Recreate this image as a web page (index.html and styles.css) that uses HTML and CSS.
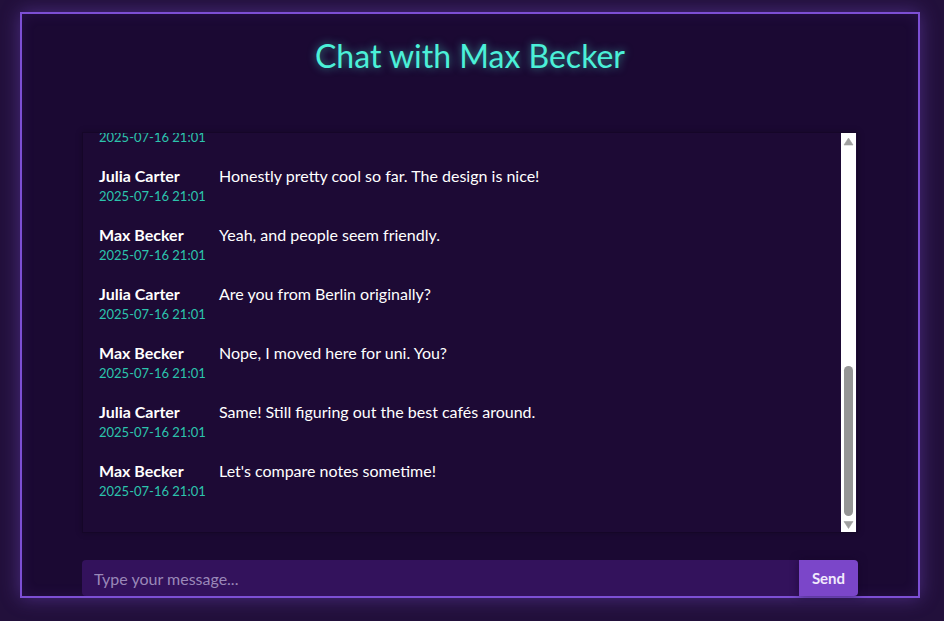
FILE: index.html
```html
<!DOCTYPE html>
<html lang="en">
<head>
<meta charset="utf-8">
<title>Chat with Max Becker</title>
<link rel="stylesheet" href="styles.css">
</head>
<body>
<div class="chat-container">
  <h1 class="chat-title">Chat with Max Becker</h1>
  <div class="chat-box-wrap">
    <div class="chat-box">
      <div class="chat-list">
        <div class="msg"><div class="meta"><div class="name">Julia Carter</div><div class="time">2025-07-16 21:00</div></div><div class="text">Hi Max! Nice to match with you.</div></div>
        <div class="msg"><div class="meta"><div class="name">Max Becker</div><div class="time">2025-07-16 21:00</div></div><div class="text">Hey Julia! Likewise.</div></div>
        <div class="msg"><div class="meta"><div class="name">Julia Carter</div><div class="time">2025-07-16 21:00</div></div><div class="text">How's your week going?</div></div>
        <div class="msg"><div class="meta"><div class="name">Max Becker</div><div class="time">2025-07-16 21:00</div></div><div class="text">Pretty busy, but good. Yours?</div></div>
        <div class="msg"><div class="meta"><div class="name">Julia Carter</div><div class="time">2025-07-16 21:00</div></div><div class="text">Same, lots of work but nothing crazy.</div></div>
        <div class="msg"><div class="meta"><div class="name">Max Becker</div><div class="time">2025-07-16 21:01</div></div><div class="text">Are you new here?</div></div>
        <div class="msg"><div class="meta"><div class="name">Julia Carter</div><div class="time">2025-07-16 21:01</div></div><div class="text">Yes, just joined a few days ago.</div></div>
        <div class="msg"><div class="meta"><div class="name">Max Becker</div><div class="time">2025-07-16 21:01</div></div><div class="text">Me too! Still figuring it out.</div></div>
        <div class="msg"><div class="meta"><div class="name">Julia Carter</div><div class="time">2025-07-16 21:01</div></div><div class="text">It's all pretty new to me as well.</div></div>
        <div class="msg"><div class="meta"><div class="name">Max Becker</div><div class="time">2025-07-16 21:01</div></div><div class="text">How do you like it so far?</div></div>
        <div class="msg"><div class="meta"><div class="name">Julia Carter</div><div class="time">2025-07-16 21:01</div></div><div class="text">Honestly pretty cool so far. The design is nice!</div></div>
        <div class="msg"><div class="meta"><div class="name">Max Becker</div><div class="time">2025-07-16 21:01</div></div><div class="text">Yeah, and people seem friendly.</div></div>
        <div class="msg"><div class="meta"><div class="name">Julia Carter</div><div class="time">2025-07-16 21:01</div></div><div class="text">Are you from Berlin originally?</div></div>
        <div class="msg"><div class="meta"><div class="name">Max Becker</div><div class="time">2025-07-16 21:01</div></div><div class="text">Nope, I moved here for uni. You?</div></div>
        <div class="msg"><div class="meta"><div class="name">Julia Carter</div><div class="time">2025-07-16 21:01</div></div><div class="text">Same! Still figuring out the best cafés around.</div></div>
        <div class="msg"><div class="meta"><div class="name">Max Becker</div><div class="time">2025-07-16 21:01</div></div><div class="text">Let's compare notes sometime!</div></div>
      </div>
    </div>
    <div class="scrollbar" aria-hidden="true">
      <svg width="15" height="399" viewBox="0 0 15 399">
        <rect x="0" y="0" width="15" height="399" fill="#ffffff"/>
        <polygon points="3,12 7.5,5 12,12" fill="#a0a0a0" stroke="#a0a0a0" stroke-width="0.6" stroke-linejoin="round"/>
        <polygon points="3,388.5 7.5,395.5 12,388.5" fill="#a0a0a0" stroke="#a0a0a0" stroke-width="0.6" stroke-linejoin="round"/>
        <rect x="3" y="233" width="9" height="150" rx="4.5" fill="#959595"/>
      </svg>
    </div>
  </div>
  <form class="chat-form">
    <input class="chat-input" type="text" placeholder="Type your message...">
    <button class="chat-send" type="button">Send</button>
  </form>
</div>
</body>
</html>
```
FILE: styles.css
```css
html, body {
  margin: 0;
  padding: 0;
  height: 100%;
}
body {
  background: #22103b;
  font-family: Lato, "Noto Sans", sans-serif;
  color: #ffffff;
  padding: 12px 0 0 20px;
  box-sizing: border-box;
}
.chat-container {
  width: 900px;
  height: 586px;
  box-sizing: border-box;
  border: 2px solid #7d4fd4;
  background: #1b0933;
  box-shadow: 0 0 18px rgba(125, 79, 212, 0.45), inset 0 0 14px rgba(125, 79, 212, 0.12);
  padding: 0 60px;
  display: flex;
  flex-direction: column;
}
.chat-title {
  margin: 22px 0 56px;
  font-size: 32px;
  line-height: 40px;
  font-weight: 400;
  text-align: center;
  color: #4bf0d8;
  text-shadow: 0 0 8px rgba(75, 240, 216, 0.55);
}
.chat-box-wrap {
  position: relative;
  height: 401px;
  flex: none;
}
.chat-box {
  height: 100%;
  box-sizing: border-box;
  border: 1px solid #150628;
  background: #1d0a35;
  box-shadow: 0 0 6px rgba(0, 0, 0, 0.25);
  overflow-y: auto;
  scrollbar-width: none;
  display: flex;
  flex-direction: column-reverse;
}
.chat-list {
  padding: 14px 0 22px;
}
.msg {
  display: flex;
  padding: 10px 16px;
}
.meta {
  width: 120px;
  flex: none;
}
.name {
  font-weight: 700;
  font-size: 16px;
  line-height: 20px;
}
.time {
  font-size: 13px;
  line-height: 17px;
  margin-top: 2px;
  color: #2cc4ad;
}
.text {
  font-size: 16px;
  line-height: 20px;
}
.scrollbar {
  position: absolute;
  top: 1px;
  right: 2px;
  width: 15px;
  height: 399px;
}
.scrollbar svg {
  display: block;
}
.chat-form {
  display: flex;
  margin: 27px 0 0;
  height: 36px;
  flex: none;
}
.chat-input {
  flex: 1;
  border: none;
  outline: none;
  background: #33125c;
  border-radius: 4px 0 0 4px;
  padding: 0 12px;
  font-family: Lato, sans-serif;
  font-size: 16px;
  color: #ffffff;
}
.chat-input::placeholder {
  color: #9a88b8;
}
.chat-send {
  width: 59px;
  border: none;
  background: #7b46c9;
  color: #f1eafc;
  font-family: Lato, sans-serif;
  font-weight: 700;
  font-size: 15px;
  border-radius: 0 4px 4px 0;
  box-shadow: 0 0 8px rgba(20, 5, 40, 0.6);
  cursor: pointer;
}
```
